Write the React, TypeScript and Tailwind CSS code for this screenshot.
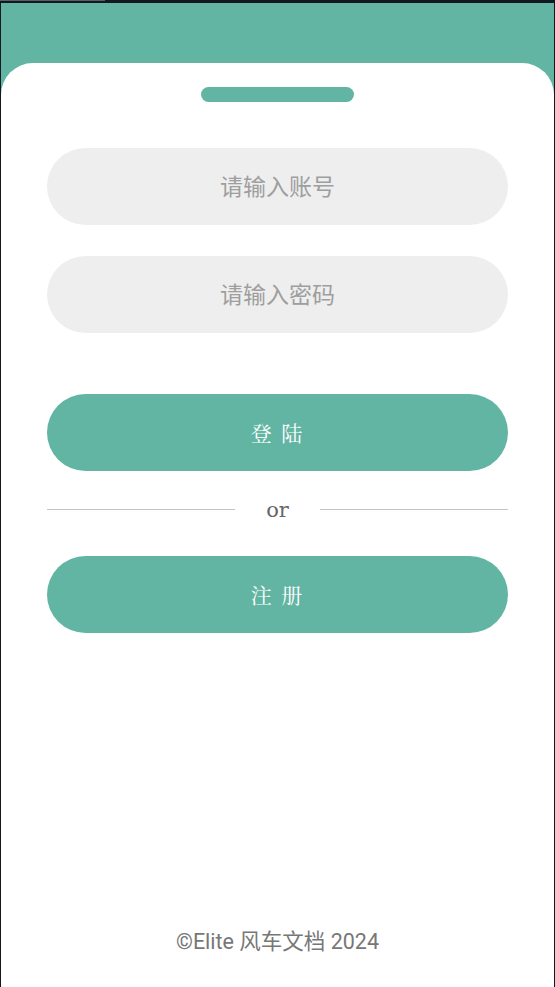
export default function App() {
  return (
    <div className="h-[987px] w-[555px] bg-[#121820] pt-[3px] px-px overflow-hidden relative">
      <div className="absolute left-0 top-0 h-px w-[105px] bg-[#5b5f63]" />
      <div className="flex h-full flex-col bg-[#63b5a3]">
        <div className="h-[60px] shrink-0" />
        <div className="flex flex-1 flex-col items-center rounded-t-[32px] bg-white px-[46px] font-['Noto_Sans_CJK_SC',sans-serif]">
          <div className="mt-[24px] h-[15px] w-[153px] rounded-full bg-[#63b5a3]" />

          <input
            placeholder="请输入账号"
            className="mt-[46px] h-[77px] w-full rounded-full bg-[#eeeeee] pb-[4px] text-center text-[23px] text-[#555] outline-none placeholder:text-[#9e9e9e]"
          />
          <input
            placeholder="请输入密码"
            type="text"
            className="mt-[31px] h-[77px] w-full rounded-full bg-[#eeeeee] pb-[4px] text-center text-[23px] text-[#555] outline-none placeholder:text-[#9e9e9e]"
          />

          <button className="mt-[61px] flex h-[77px] w-full items-center justify-center rounded-full bg-[#63b5a3] text-[21px] tracking-[2px] text-white font-['Noto_Serif_CJK_SC','Noto_Sans_CJK_SC',serif]">
            登 陆
          </button>

          <div className="mt-[26px] flex h-[24px] w-full items-center">
            <div className="h-px flex-1 bg-[#c4c4c4]" />
            <span className="w-[85px] pt-[2px] text-center font-['DejaVu_Serif',serif] text-[21px] leading-[22px] text-[#666]">or</span>
            <div className="h-px flex-1 bg-[#c4c4c4]" />
          </div>

          <button className="mt-[35px] flex h-[77px] w-full items-center justify-center rounded-full bg-[#63b5a3] text-[21px] tracking-[2px] text-white font-['Noto_Serif_CJK_SC','Noto_Sans_CJK_SC',serif]">
            注 册
          </button>

          <div className="mt-auto mb-[29px] font-['Roboto','Noto_Sans_CJK_SC',sans-serif] text-[21.5px] text-[#777]">
            ©Elite 风车文档 2024
          </div>
        </div>
      </div>
    </div>
  );
}
